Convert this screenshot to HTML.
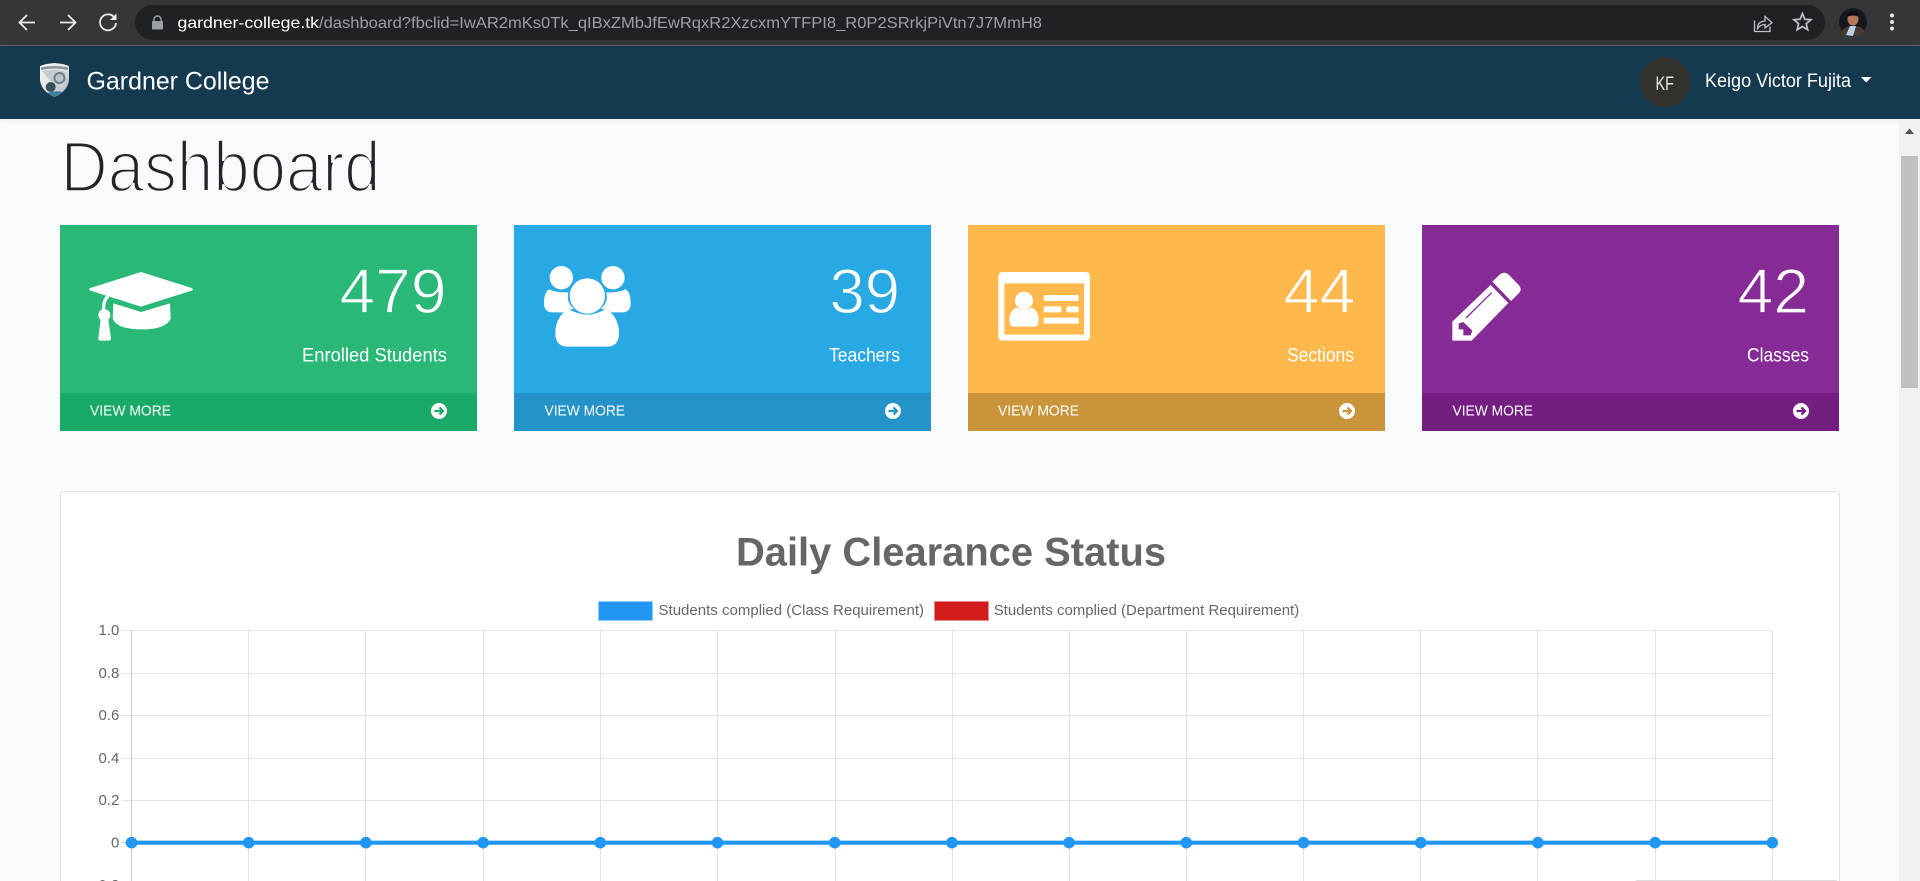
<!DOCTYPE html>
<html lang="en">
<head>
<meta charset="utf-8">
<title>Dashboard - Gardner College</title>
<style>
html,body{margin:0;padding:0;width:1920px;height:881px;overflow:hidden;background:#f9fafc;font-family:"Liberation Sans",sans-serif}
#root{position:relative;width:1920px;height:881px;overflow:hidden}
.abs{position:absolute}
#toolbar{left:0;top:0;width:1920px;height:45px;background:#35363a;border-bottom:1px solid #5f6063}
#omni{left:135px;top:5px;width:1690px;height:35px;border-radius:18px;background:#202124}
#nav{left:0;top:46px;width:1920px;height:73px;background:#15394f;box-shadow:0 2px 5px rgba(0,0,0,.06)}
#track{left:1899px;top:119px;width:21px;height:762px;background:#f1f1f1}
#thumb{left:1901px;top:156px;width:17px;height:232px;background:#c1c1c1}
.card{top:225px;width:417px;height:206px;overflow:hidden}
.card div{position:absolute;left:0;right:0;bottom:0;height:38px}
#panel{left:60px;top:491px;width:1778px;height:420px;background:#fff;border:1px solid #dfe0e1;border-radius:4px}
#strip{left:1633px;top:880px;width:205px;height:6px;background:#fff;border:1px solid #dcdcdc;border-radius:5px 5px 0 0}
svg{position:absolute;left:0;top:0}
text{font-family:"Liberation Sans",sans-serif}
</style>
</head>
<body>
<div id="root">
<div class="abs" id="toolbar"></div>
<div class="abs" id="omni"></div>
<div class="abs" id="nav"></div>
<div class="abs" id="track"></div>
<div class="abs" id="thumb"></div>

<div class="abs card" style="left:60px;background:#2ab879"><div style="background:#19a968"></div></div>
<div class="abs card" style="left:514px;background:#29a9e4"><div style="background:#2393ca"></div></div>
<div class="abs card" style="left:968px;background:#ffb84b"><div style="background:#c9943a"></div></div>
<div class="abs card" style="left:1422px;background:#862b96"><div style="background:#741e82"></div></div>

<div class="abs" id="panel"></div>
<div class="abs" id="strip"></div>

<svg width="1920" height="881" viewBox="0 0 1920 881" xmlns="http://www.w3.org/2000/svg">
<defs>
<linearGradient id="sh" x1="0" y1="0" x2="1" y2="1">
<stop offset="0" stop-color="#f4f5f6"/><stop offset=".55" stop-color="#dfe3e5"/><stop offset="1" stop-color="#9fabb2"/>
</linearGradient>
</defs>

<!-- browser toolbar -->
<g fill="none" stroke="#e8eaed" stroke-width="1.8">
<path d="M35 22.5H20M27 15l-7.5 7.5L27 30"/>
<path d="M60 22.5h15M68 15l7.5 7.5L68 30"/>
<path d="M114 17a8 8 0 1 0 2 6"/>
</g>
<path d="M116.500 13.500v6.500h-6.500z" fill="#e8eaed"/>
<g fill="#9aa0a6">
<rect x="152" y="21" width="11" height="8.500" rx="1"/>
<path d="M154 21v-1.500a3.500 3.500 0 0 1 7 0V21" fill="none" stroke="#9aa0a6" stroke-width="1.400"/>
</g>
<text x="177.500" y="28" font-size="16" fill="#fff" textLength="141.500" lengthAdjust="spacingAndGlyphs">gardner-college.tk</text>
<text x="319" y="28" font-size="16" fill="#9aa0a6" textLength="723" lengthAdjust="spacingAndGlyphs">/dashboard?fbclid=IwAR2mKs0Tk_qIBxZMbJfEwRqxR2XzcxmYTFPI8_R0P2SRrkjPiVtn7J7MmH8</text>
<g fill="none" stroke="#bdc1c6" stroke-width="1.300">
<path d="M1754.500 20.500V31.500H1770V26.500"/>
<path d="M1757.500 28.500Q1757.500 21.500 1765 21V16.500L1772 22.700L1765 28V24.500Q1760.500 24.500 1757.500 28.500Z"/>
<path stroke-width="1.700" d="M1802.400 13.500L1804.750 19.260L1810.960 19.720L1806.200 23.740L1807.690 29.780L1802.400 26.500L1797.110 29.780L1798.600 23.740L1793.840 19.720L1800.050 19.260Z"/>
</g>
<circle cx="1853" cy="22" r="14" fill="#15181c"/>
<path d="M1841 34Q1843 27 1850 26L1857 26Q1864 28 1865 32Q1860 36 1853 36Q1845 36 1841 34Z" fill="#4a3a34"/>
<path d="M1846 35L1850 26H1856L1853 36Z" fill="#b9d2e8"/>
<ellipse cx="1853" cy="19" rx="5.500" ry="6.500" fill="#b5775c"/>
<path d="M1847 17Q1848 11 1853 11.500Q1859 11.500 1859 17Q1853 14 1847 17Z" fill="#0e0c0c"/>
<g fill="#e8eaed"><circle cx="1892" cy="15.500" r="2"/><circle cx="1892" cy="22" r="2"/><circle cx="1892" cy="28.500" r="2"/></g>

<!-- nav -->
<path d="M40 66L46 64L54.500 63L63 64L69 66V80Q68 91 54.500 97Q41 91 40 80Z" fill="url(#sh)"/>
<path d="M41 67.500Q54 64.500 68 67.500V70Q54 67 41 70Z" fill="#8a9296"/>
<path d="M42 71L58 90L66 72Q54 68 42 71Z" fill="#c4cacd"/>
<circle cx="59.500" cy="78" r="5" fill="#bcc5ca" stroke="#6f7f89" stroke-width="2"/>
<circle cx="50.700" cy="87" r="5" fill="#3c4f5c"/>
<path d="M47 93Q55 90 63 92L54.500 97Z" fill="#3f7fa0"/>
<text x="86.500" y="89.700" font-size="25" fill="#fff" textLength="183" lengthAdjust="spacingAndGlyphs">Gardner College</text>
<circle cx="1665" cy="82" r="25" fill="#32322c"/>
<text x="1655.500" y="90" font-size="19" fill="#e8e8e8" textLength="18.500" lengthAdjust="spacingAndGlyphs">KF</text>
<text x="1705" y="87" font-size="19" fill="#fff" textLength="146" lengthAdjust="spacingAndGlyphs">Keigo Victor Fujita</text>
<path d="M1861 77H1871.500L1866.200 82.500Z" fill="#fff"/>

<!-- scrollbar arrow -->
<path d="M1905 134L1909.500 128.500L1914 134Z" fill="#505050"/>

<!-- heading -->
<text x="60.500" y="191.700" font-size="71" fill="#212529" stroke="#f9fafc" stroke-width="2.600" textLength="320" lengthAdjust="spacingAndGlyphs">Dashboard</text>

<!-- card 1 -->
<g transform="translate(40,210) scale(.33333)" fill="#fff">
<path d="M303 186L455 234Q462 238 455 242L303 290L151 242Q144 238 151 234Z"/>
<path d="M220 280L303 306L390 280L392 325Q380 358 305 358Q230 358 218 325Z"/>
<path d="M205 258Q188 270 191 312" fill="none" stroke="#fff" stroke-width="10"/>
<circle cx="193" cy="315" r="18"/>
<path d="M182 328L175 385Q175 392 182 392H206Q213 392 213 385L205 328Z"/>
</g>
<text x="339.500" y="313" font-size="63" fill="#fff" stroke="#2ab879" stroke-width="1.200" textLength="107" lengthAdjust="spacingAndGlyphs">479</text>
<text x="302" y="361.500" font-size="19" fill="#fff" textLength="145" lengthAdjust="spacingAndGlyphs">Enrolled Students</text>
<text x="90" y="415.500" font-size="15" fill="#fff" textLength="81" lengthAdjust="spacingAndGlyphs">VIEW MORE</text>
<circle cx="439" cy="411" r="8" fill="#fff"/>
<path d="M434.500 411H442M439.500 407.500L443 411L439.500 414.500" fill="none" stroke="#19a968" stroke-width="2.200"/>

<!-- card 2 -->
<g transform="translate(500,210) scale(.33333)" fill="#fff">
<circle cx="262" cy="258" r="53"/>
<circle cx="184" cy="203" r="35"/>
<circle cx="339" cy="203" r="35"/>
<path d="M166 370Q166 322 205 296Q262 332 318 296Q357 322 357 370Q357 410 320 410H205Q166 410 166 370Z"/>
<path d="M148 238Q165 248 205 247Q198 278 222 296Q196 300 190 307H155Q132 305 132 280Q132 245 148 238Z"/>
<path d="M376 238Q359 248 319 247Q326 278 302 296Q328 300 334 307H369Q392 305 392 280Q392 245 376 238Z"/>
</g>
<text x="829.500" y="313" font-size="63" fill="#fff" stroke="#29a9e4" stroke-width="1.200" textLength="70.500" lengthAdjust="spacingAndGlyphs">39</text>
<text x="829" y="361.500" font-size="19" fill="#fff" textLength="71" lengthAdjust="spacingAndGlyphs">Teachers</text>
<text x="544.500" y="415.500" font-size="15" fill="#fff" textLength="80.500" lengthAdjust="spacingAndGlyphs">VIEW MORE</text>
<circle cx="893" cy="411" r="8" fill="#fff"/>
<path d="M888.500 411H896M893.500 407.500L897 411L893.500 414.500" fill="none" stroke="#2393ca" stroke-width="2.200"/>

<!-- card 3 -->
<g transform="translate(950,210) scale(.33333)" fill="#fff">
<path fill-rule="evenodd" d="M159 186H406Q420 186 420 200V378Q420 392 406 392H159Q145 392 145 378V200Q145 186 159 186ZM163 220V374H402V220Z"/>
<circle cx="222" cy="272" r="27"/>
<path d="M178 330Q178 302 200 293Q222 306 245 293Q266 302 266 330Q266 350 250 350H194Q178 350 178 330Z"/>
<rect x="281" y="255" width="105" height="18" rx="4"/>
<rect x="281" y="289" width="53" height="18" rx="4"/>
<rect x="349" y="289" width="37" height="18" rx="4"/>
<rect x="281" y="323" width="105" height="18" rx="4"/>
</g>
<text x="1283.500" y="313" font-size="63" fill="#fff" stroke="#ffb84b" stroke-width="1.200" textLength="72" lengthAdjust="spacingAndGlyphs">44</text>
<text x="1287" y="361.500" font-size="19" fill="#fff" textLength="67" lengthAdjust="spacingAndGlyphs">Sections</text>
<text x="998" y="415.500" font-size="15" fill="#fff" textLength="81" lengthAdjust="spacingAndGlyphs">VIEW MORE</text>
<circle cx="1347" cy="411" r="8" fill="#fff"/>
<path d="M1342.500 411H1350M1347.500 407.500L1351 411L1347.500 414.500" fill="none" stroke="#c9943a" stroke-width="2.200"/>

<!-- card 4 -->
<g transform="translate(1400,210) scale(.33333)" fill="#fff">
<path d="M277 215L300 193Q314 183 326 194L356 225Q368 238 356 250L333 273Z"/>
<path d="M272 225L325 279L215 392H157V335Z"/>
<path d="M198 324L275 248" stroke="#862b96" stroke-width="4" fill="none"/>
<path d="M176 340L190 336L217 362L212 376H190V358H176Z" fill="#862b96"/>
</g>
<text x="1737.500" y="313" font-size="63" fill="#fff" stroke="#862b96" stroke-width="1.200" textLength="71.500" lengthAdjust="spacingAndGlyphs">42</text>
<text x="1747" y="361.500" font-size="19" fill="#fff" textLength="62" lengthAdjust="spacingAndGlyphs">Classes</text>
<text x="1452.500" y="415.500" font-size="15" fill="#fff" textLength="80.500" lengthAdjust="spacingAndGlyphs">VIEW MORE</text>
<circle cx="1801" cy="411" r="8" fill="#fff"/>
<path d="M1796.500 411H1804M1801.500 407.500L1805 411L1801.500 414.500" fill="none" stroke="#741e82" stroke-width="2.200"/>

<!-- chart -->
<text x="736" y="565.700" font-size="40" font-weight="700" fill="#666" textLength="430" lengthAdjust="spacingAndGlyphs">Daily Clearance Status</text>
<rect x="598.500" y="601.500" width="54" height="19" fill="#2196f3" stroke="#90caf9"/>
<text x="658.500" y="614.800" font-size="15" fill="#666" textLength="265.500" lengthAdjust="spacingAndGlyphs">Students complied (Class Requirement)</text>
<rect x="934.500" y="601.500" width="54" height="19" fill="#d21c1c" stroke="#e88a8a"/>
<text x="993.700" y="614.800" font-size="15" fill="#666" textLength="305.500" lengthAdjust="spacingAndGlyphs">Students complied (Department Requirement)</text>

<g stroke="#e3e3e3" stroke-width="1" fill="none">
<path d="M121 630.500H1772.500M121 673.500H1772.500M121 715.500H1772.500M121 758.500H1772.500M121 800.500H1772.500M121 885.500H1772.500"/>
<path d="M248.500 630V881M365.500 630V881M483.500 630V881M600.500 630V881M717.500 630V881M835.500 630V881M952.500 630V881M1069.500 630V881M1186.500 630V881M1303.500 630V881M1420.500 630V881M1537.500 630V881M1655.500 630V881M1772.500 630V881"/>
</g>
<path d="M131.500 630V881M121 842.500H131" stroke="#cfcfcf" stroke-width="1" fill="none"/>

<g font-size="15" fill="#666" text-anchor="end">
<text x="119.300" y="634.800">1.0</text>
<text x="119.300" y="678">0.8</text>
<text x="119.300" y="720">0.6</text>
<text x="119.300" y="763">0.4</text>
<text x="119.300" y="805">0.2</text>
<text x="119.300" y="847.500">0</text>
<text x="119.300" y="890">-0.2</text>
</g>

<path d="M131.500 842.700H1772.500" stroke="#2196f3" stroke-width="4.200" fill="none"/>
<g fill="#2196f3">
<circle cx="131.500" cy="842.700" r="5.800"/><circle cx="248.700" cy="842.700" r="5.800"/><circle cx="365.900" cy="842.700" r="5.800"/>
<circle cx="483.100" cy="842.700" r="5.800"/><circle cx="600.300" cy="842.700" r="5.800"/><circle cx="717.500" cy="842.700" r="5.800"/>
<circle cx="834.700" cy="842.700" r="5.800"/><circle cx="951.900" cy="842.700" r="5.800"/><circle cx="1069.100" cy="842.700" r="5.800"/>
<circle cx="1186.300" cy="842.700" r="5.800"/><circle cx="1303.500" cy="842.700" r="5.800"/><circle cx="1420.700" cy="842.700" r="5.800"/>
<circle cx="1537.900" cy="842.700" r="5.800"/><circle cx="1655.100" cy="842.700" r="5.800"/><circle cx="1772.300" cy="842.700" r="5.800"/>
</g>
</svg>
</div>
</body>
</html>
